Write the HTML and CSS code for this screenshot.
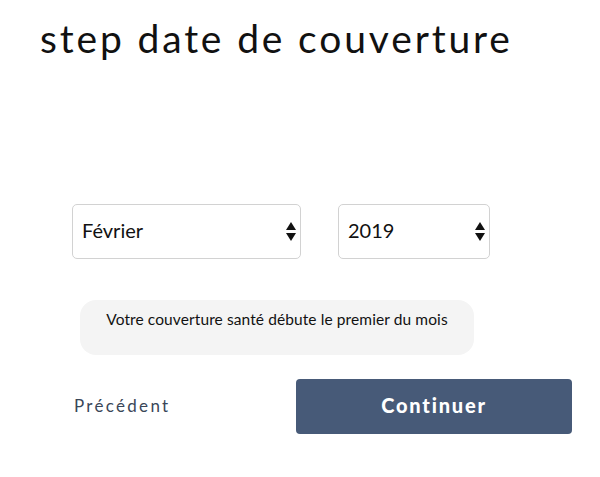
FILE: index.html
```html
<!DOCTYPE html>
<html lang="fr">
<head>
<meta charset="utf-8">
<link rel="stylesheet" href="styles.css">
</head>
<body>
<main class="page">
  <h1 class="title">step date de couverture</h1>
  <div class="selects">
    <div class="select select-month">
      <span class="select-value">Février</span>
      <svg class="arrows" width="10" height="20" viewBox="0 0 10 20"><path d="M5 0 L10 8 L0 8 Z M0 11 L10 11 L5 19 Z" fill="#111"/></svg>
    </div>
    <div class="select select-year">
      <span class="select-value">2019</span>
      <svg class="arrows" width="10" height="20" viewBox="0 0 10 20"><path d="M5 0 L10 8 L0 8 Z M0 11 L10 11 L5 19 Z" fill="#111"/></svg>
    </div>
  </div>
  <div class="info">Votre couverture santé débute le premier du mois</div>
  <div class="actions">
    <a class="prev">Précédent</a>
    <button class="continue">Continuer</button>
  </div>
</main>
</body>
</html>
```

FILE: styles.css
```css
html, body {
  margin: 0;
  padding: 0;
  background: #fff;
}
.page {
  width: 600px;
  height: 477px;
}
.title {
  margin: 0;
  padding: 15px 0 0 40px;
  height: 51px;
  font-family: "Lato", "DejaVu Sans", sans-serif;
  font-weight: 400;
  font-size: 39px;
  line-height: 46px;
  letter-spacing: 2.85px;
  color: #111;
}
.selects {
  display: flex;
  gap: 37px;
  margin: 138px 0 0 72px;
}
.select {
  box-sizing: border-box;
  height: 55px;
  border: 1px solid #d2d2d2;
  border-radius: 5px;
  display: flex;
  align-items: center;
  justify-content: space-between;
  padding: 0 4px 4px 9px;
  font-family: "Lato", sans-serif;
  font-size: 20px;
  color: #111;
}
.select-month { width: 229px; }
.select-year { width: 152px; }
.arrows { margin-top: 4px; }
.info {
  box-sizing: border-box;
  width: 394px;
  height: 55px;
  margin: 41px 0 0 80px;
  padding-top: 10px;
  background: #f4f4f4;
  border-radius: 16px;
  text-align: center;
  font-family: "Lato", sans-serif;
  font-size: 15.5px;
  letter-spacing: 0.1px;
  color: #111;
}
.actions {
  display: flex;
  align-items: center;
  margin: 24px 0 0 74px;
}
.prev {
  width: 222px;
  padding-bottom: 3px;
  font-family: "Lato", sans-serif;
  font-size: 17px;
  letter-spacing: 2.3px;
  color: #3a4658;
}
.continue {
  width: 276px;
  height: 55px;
  padding: 0 0 4px 0;
  border: none;
  border-radius: 4px;
  background: #475a78;
  color: #fff;
  font-family: "Lato", sans-serif;
  font-weight: 900;
  font-size: 20px;
  letter-spacing: 1.8px;
}
```
